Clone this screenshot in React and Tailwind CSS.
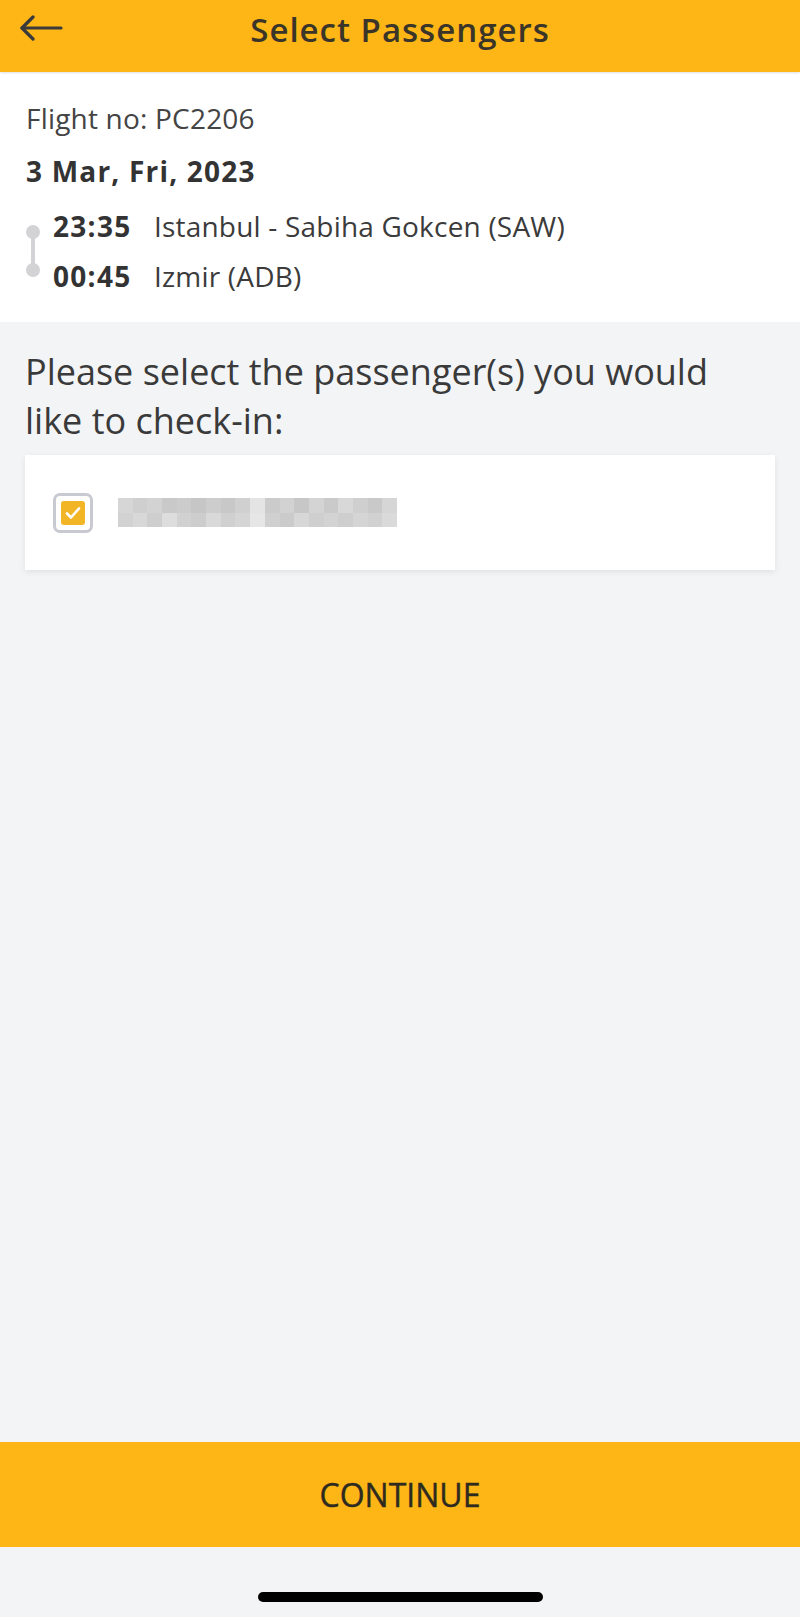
import React from 'react';

const blur = [
  ['bg-[#d6d6d6]', 'bg-[#cfcfcf]', 'bg-[#d3d3d3]', 'bg-[#c9c9c9]', 'bg-[#cccccc]', 'bg-[#c6c6c6]', 'bg-[#cdcdcd]', 'bg-[#c8c8c8]', 'bg-[#d0d0d0]', 'bg-[#e4e4e4]', 'bg-[#cbcbcb]', 'bg-[#d2d2d2]', 'bg-[#c7c7c7]', 'bg-[#d4d4d4]', 'bg-[#cacaca]', 'bg-[#d8d8d8]', 'bg-[#cfcfcf]', 'bg-[#c9c9c9]', 'bg-[#d6d6d6]'],
  ['bg-[#d2d2d2]', 'bg-[#d8d8d8]', 'bg-[#cecece]', 'bg-[#dddddd]', 'bg-[#d1d1d1]', 'bg-[#cdcdcd]', 'bg-[#d9d9d9]', 'bg-[#d0d0d0]', 'bg-[#d5d5d5]', 'bg-[#e6e6e6]', 'bg-[#d0d0d0]', 'bg-[#cbcbcb]', 'bg-[#d7d7d7]', 'bg-[#cfcfcf]', 'bg-[#d3d3d3]', 'bg-[#cecece]', 'bg-[#d5d5d5]', 'bg-[#d1d1d1]', 'bg-[#dadada]'],
];

function BlurredName() {
  return (
    <div className="grid grid-cols-[repeat(19,1fr)] grid-rows-2 w-[279px] h-[29px]">
      {blur.flat().map((c, i) => (
        <div key={i} className={c} />
      ))}
    </div>
  );
}

function App() {
  return (
    <div className="min-h-screen flex flex-col bg-[#f3f4f6] font-['Open_Sans',sans-serif] text-[#3b3b3b]">
      <header className="relative h-[72px] bg-[#fdb616] flex justify-center pt-[10px] shadow-[0_1px_2px_rgba(0,0,0,0.12)] z-10">
        <button className="absolute left-[20px] top-[15px]">
          <svg width="43" height="26" viewBox="0 0 43 26" fill="none" stroke="#3a3a3a" strokeWidth="3.2" strokeLinecap="round" strokeLinejoin="round">
            <path d="M2 13 H41" />
            <path d="M13 2 L2 13 L13 24" />
          </svg>
        </button>
        <h1 className="text-[33px] leading-[40px] font-semibold tracking-[1px] text-[#3a3528]">Select Passengers</h1>
      </header>

      <section className="bg-white px-[26px] pt-[20px] pb-[21px]">
        <p className="text-[28px] leading-[53px] tracking-[0.2px] text-[#444]">Flight no: PC2206</p>
        <p className="text-[28px] leading-[53px] font-bold tracking-[1.2px] text-[#333]">3 Mar, Fri, 2023</p>
        <div className="flex mt-[3px]">
          <svg width="27" height="100" viewBox="0 0 27 100" className="shrink-0">
            <line x1="7" y1="31" x2="7" y2="69" stroke="#d3d3d6" strokeWidth="4" />
            <circle cx="7" cy="31" r="7" fill="#d3d3d6" />
            <circle cx="7" cy="69" r="7" fill="#d3d3d6" />
          </svg>
          <div className="flex flex-col">
            <div className="flex text-[28px] leading-[50px]">
              <span className="font-bold tracking-[1.3px] text-[#333] w-[101px]">23:35</span>
              <span className="tracking-[0.2px]">Istanbul - Sabiha Gokcen (SAW)</span>
            </div>
            <div className="flex text-[28px] leading-[50px]">
              <span className="font-bold tracking-[1.3px] text-[#333] w-[101px]">00:45</span>
              <span className="tracking-[0.2px]">Izmir (ADB)</span>
            </div>
          </div>
        </div>
      </section>

      <main className="flex-1 flex flex-col">
        <h2 className="px-[25px] pt-[25px] text-[36px] leading-[49px] text-[#3a3a3a]">
          Please select the passenger(s) you would
          <br />
          like to check-in:
        </h2>
        <div className="mx-[25px] mt-[10px] h-[115px] bg-white shadow-[0_2px_6px_rgba(0,0,0,0.08)] flex items-center pl-[28px]">
          <div className="w-[40px] h-[40px] border-[3px] border-[#c9cad1] rounded-[7px] p-[5px] bg-white">
            <div className="w-full h-full bg-[#f2b526] rounded-[3px] flex items-center justify-center">
              <svg width="20" height="20" viewBox="0 0 20 20" fill="none" stroke="white" strokeWidth="2.6" strokeLinecap="round" strokeLinejoin="round">
                <path d="M4 10.5 L8 14.5 L16 5.5" />
              </svg>
            </div>
          </div>
          <div className="ml-[25px]">
            <BlurredName />
          </div>
        </div>
      </main>

      <button className="h-[105px] w-full bg-[#fdb616] flex items-center justify-center text-[32px] font-normal text-[#2e2a1f] [-webkit-text-stroke:0.4px_#2e2a1f]">
        CONTINUE
      </button>
      <div className="h-[70px] flex justify-center pt-[45px]">
        <div className="w-[285px] h-[10px] rounded-full bg-black" />
      </div>
    </div>
  );
}

export default App;
